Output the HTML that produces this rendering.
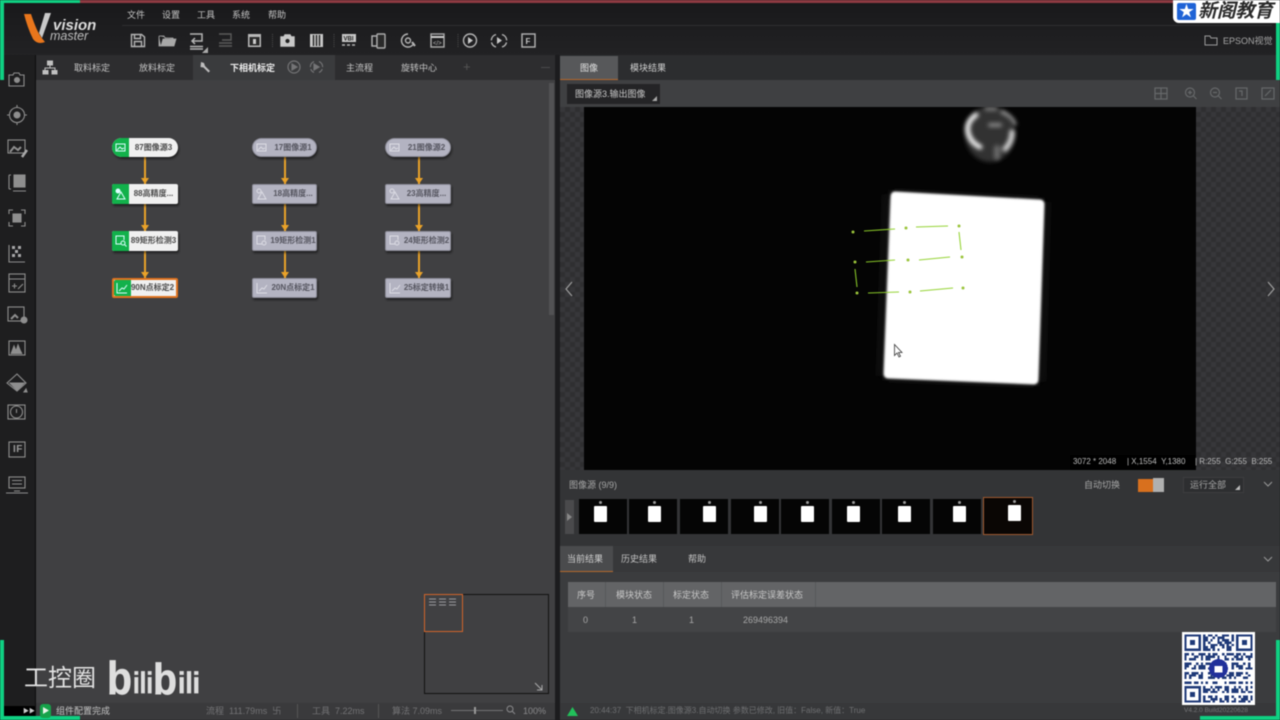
<!DOCTYPE html>
<html lang="zh"><head><meta charset="utf-8"><title>VisionMaster</title>
<style>
*{box-sizing:border-box}
html,body{margin:0;padding:0;background:#1f1f21}
body{width:1280px;height:720px;overflow:hidden;position:relative;font-family:"Liberation Sans","Noto Sans CJK SC",sans-serif;font-size:9px;color:#c4c4c4}
#w{position:absolute;left:0;top:0;width:1280px;height:720px;overflow:hidden;filter:blur(.45px)}
.a{position:absolute}
.t{position:absolute;white-space:nowrap;line-height:12px}
.n{position:absolute;width:66px;height:20px;border-radius:2px;font-weight:bold;font-size:8px;line-height:20px;box-shadow:1px 2px 2px rgba(0,0,0,.5);white-space:nowrap}
.g{background:#f0f0f0;color:#4a4a4a}
.g i{position:absolute;left:0;top:0;bottom:0;width:17px;background:#12b14b;border-radius:2px 0 0 2px}
.s{background:#b3b3c1;color:#55555f;border:1px solid #8d8d99}
.n b{position:absolute;left:17px;right:0;text-align:center;font-weight:bold}
.p{border-radius:10px}.p i{border-radius:10px 0 0 10px}
.n svg{position:absolute;left:3px;top:4px}
.th{position:absolute;top:499px;width:48px;height:35px;background:#050505}
.th:before{content:"";position:absolute;left:var(--x);top:7px;width:13px;height:16px;background:#fff;border-radius:1px}
.th:after{content:"";position:absolute;left:calc(var(--x) + 5px);top:2px;width:3px;height:3px;border-radius:2px;background:#999}
</style></head><body>
<div id="w">

<!-- panels -->
<div class="a" style="left:0;top:3px;width:1280px;height:52px;background:linear-gradient(#19191b,#222224)"></div>
<div class="a" style="left:0;top:55px;width:36px;height:665px;background:#1e1e1f"></div>
<div class="a" style="left:35px;top:55px;width:1px;height:665px;background:#0d0d0d"></div>
<div class="a" style="left:36px;top:55px;width:519px;height:25px;background:#2d2d2f"></div>
<div class="a" style="left:36px;top:80px;width:519px;height:623px;background:#404042"></div>
<div class="a" style="left:36px;top:703px;width:519px;height:17px;background:#3a3a3c"></div>
<div class="a" style="left:555px;top:55px;width:5px;height:665px;background:#1c1c1e"></div>
<div class="a" style="left:193px;top:55px;width:142px;height:25px;background:#3a3b3d"></div>
<div class="a" style="left:549px;top:83px;width:5px;height:232px;background:#525254"></div>

<!-- right panel -->
<div class="a" style="left:560px;top:55px;width:720px;height:25px;background:#2c2d2f"></div>
<div class="a" style="left:560px;top:56px;width:58px;height:24px;background:#57585a;border-bottom:1px solid #b5682c"></div>
<div class="a" style="left:560px;top:80px;width:720px;height:27px;background:#3f4042"></div>
<div class="a" style="left:567px;top:84px;width:93px;height:20px;background:#242426"></div>
<div class="a" style="left:560px;top:107px;width:24px;height:363px;background:repeating-conic-gradient(#2f2f31 0 25%,#37373a 0 50%) 0 0/10px 10px"></div>
<div class="a" style="left:1196px;top:107px;width:84px;height:363px;background:repeating-conic-gradient(#2f2f31 0 25%,#37373a 0 50%) 0 0/10px 10px"></div>
<div class="a" style="left:560px;top:470px;width:720px;height:76px;background:#333436"></div>
<div class="a" style="left:560px;top:546px;width:720px;height:26px;background:#37383a"></div>
<div class="a" style="left:560px;top:546px;width:53px;height:26px;background:#4a4b4d;border-bottom:1px solid #b5682c"></div>
<div class="a" style="left:560px;top:572px;width:720px;height:148px;background:#3b3c3e"></div>
<div class="a" style="left:560px;top:703px;width:720px;height:17px;background:#37383a"></div>

<!-- image -->
<svg class="a" style="left:584px;top:107px" width="612" height="363" viewBox="584 107 612 363">
<defs>
<filter id="b1" x="-10%" y="-10%" width="120%" height="120%"><feGaussianBlur stdDeviation="1"/></filter>
<filter id="b2" x="-30%" y="-30%" width="160%" height="160%"><feGaussianBlur stdDeviation="2.200"/></filter>
<filter id="b9" x="-30%" y="-30%" width="160%" height="160%"><feGaussianBlur stdDeviation="7"/></filter>
</defs>
<rect x="584" y="107" width="612" height="363" fill="#040404"/>
<polygon points="888,194 1045,202 1040,382 882,376" fill="#1c1c1c" filter="url(#b9)"/>
<ellipse cx="990" cy="134" rx="25" ry="28" fill="#303030" filter="url(#b2)"/>
<g fill="none" stroke="#f0f0f0" filter="url(#b2)" stroke-linecap="round">
<path d="M976 115Q966 122 968 132T980 147" stroke-width="5"/>
<path d="M1012 132Q1012 142 1005 149" stroke-width="5" stroke="#d8d8d8"/>
<path d="M1002 112Q1012 116 1015 124" stroke-width="3" stroke="#aaa"/>
<path d="M986 109h10" stroke-width="3" stroke="#888"/>
<path d="M990 125h10" stroke-width="4" stroke="#888"/>
<path d="M997 148v9" stroke-width="6" stroke="#6a6a6a"/>
</g>
<polygon points="895,196 1040,204 1034,380 888,374" fill="#fff" stroke="#fff" stroke-width="9" stroke-linejoin="round" filter="url(#b1)"/>
<g stroke="#8fd12a" stroke-width="1.100" fill="none" opacity=".95">
<path d="M864 231L895 229M916 227L948 226M959 232L961 250M950 257L919 260M895 260L866 262M855 269L857 287M868 293L899 292M920 291L953 288"/>
</g>
<g fill="#9ac43a"><circle cx="853" cy="232" r="1.500"/><circle cx="906" cy="228" r="1.500"/><circle cx="959" cy="226" r="1.500"/><circle cx="962" cy="257" r="1.500"/><circle cx="908" cy="260" r="1.500"/><circle cx="855" cy="262" r="1.500"/><circle cx="857" cy="293" r="1.500"/><circle cx="910" cy="292" r="1.500"/><circle cx="963" cy="288" r="1.500"/></g>
<path d="M894.500 344.500v11l2.500-2.500 2 4 1.500-.8-2-3.700h3.500z" fill="#fff" stroke="#333" stroke-width=".8"/>
</svg>
<svg class="a" style="left:562px;top:280px" width="14" height="18"><path d="M10 2L4 9l6 7" fill="none" stroke="#9a9a9a" stroke-width="1.300"/></svg>
<svg class="a" style="left:1264px;top:280px" width="14" height="18"><path d="M4 2l6 7-6 7" fill="none" stroke="#9a9a9a" stroke-width="1.300"/></svg>
<div class="a" style="left:1070px;top:455px;width:126px;height:15px;background:#000"></div>
<div class="t" style="left:1073px;top:456px;font-size:8px;color:#bdbdbd">3072 * 2048</div>
<div class="t" style="left:1127px;top:456px;font-size:8px;color:#bdbdbd">| X,1554 &nbsp;Y,1380</div>
<div class="t" style="left:1195px;top:456px;font-size:8px;color:#bdbdbd">| R:255 &nbsp;G:255 &nbsp;B:255</div>

<!-- image toolbar -->
<svg class="a" style="left:1150px;top:84px" width="125" height="20" fill="none" stroke="#66686a" stroke-width="1.200">
<rect x="5" y="4" width="12" height="11"/><path d="M5 9.500h12M11 4v11"/>
<circle cx="40" cy="8.500" r="4.500"/><path d="M43.500 12l3 3M38 8.500h4M40 6.500v4"/>
<circle cx="65" cy="8.500" r="4.500"/><path d="M68.500 12l3 3M63 8.500h4"/>
<rect x="86" y="4" width="11" height="11"/><path d="M89 7h3v5"/>
<rect x="112" y="4" width="12" height="11"/><path d="M115 12l6-6"/>
</svg>

<!-- top frame -->
<div class="a" style="left:75px;top:0;width:1205px;height:3px;background:#8e3a42"></div>
<div class="a" style="left:0;top:0;width:80px;height:3px;background:#0fd082"></div>
<div class="a" style="left:0;top:0;width:4px;height:80px;background:#0fd082"></div>
<div class="a" style="left:1276px;top:0;width:4px;height:80px;background:#0fd082"></div>
<div class="a" style="left:0;top:640px;width:4px;height:80px;background:#0fd082"></div>
<div class="a" style="left:1276px;top:640px;width:4px;height:80px;background:#0fd082"></div>
<div class="a" style="left:0;top:716px;width:80px;height:4px;background:#0fd082"></div>
<div class="a" style="left:1200px;top:716px;width:80px;height:4px;background:#0fd082"></div>

<!-- logo -->
<svg class="a" style="left:22px;top:10px" width="100" height="36">
<path d="M2 4h7c3 9 6 17 10 23l4 5c-5 2-9 1-12-3C7 21 4 12 2 4z" fill="#e8761c"/>
<path d="M23 3h6l-9 25-3-5z" fill="#c9c9c9"/>
<text x="31" y="20" font-family="Liberation Sans" font-style="italic" font-weight="bold" font-size="15" fill="#dcdcdc">vision</text>
<text x="28" y="30" font-family="Liberation Sans" font-style="italic" font-size="12.500" fill="#bdbdbd">master</text>
</svg>

<!-- menu -->
<div class="t" style="left:127px;top:9px">文件</div>
<div class="t" style="left:162px;top:9px">设置</div>
<div class="t" style="left:197px;top:9px">工具</div>
<div class="t" style="left:232px;top:9px">系统</div>
<div class="t" style="left:268px;top:9px">帮助</div>
<div class="a" style="left:122px;top:25px;width:1150px;height:1px;background:#2e2e30"></div>

<!-- toolbar icons -->
<svg class="a" style="left:125px;top:28px" width="420" height="24" fill="none" stroke="#b4b4b4" stroke-width="1.400">
<path d="M6.500 6.500h10l3 2.500v9.500h-13z"/><path d="M9.500 6.500v4h6v-4M9.500 18.500v-5h7v5"/>
<path d="M34 8v10h15l2-7H38l-2 7M34 8h5l1 2h8v1" fill="#a8a8a8" stroke="#a8a8a8" stroke-width=".8"/>
<path d="M65 6h12v7H68M70 10l-3 3 3 3M65 18.500h13M65 21h13" stroke-width="1.500"/>
<path d="M94 6h12v6H97M94 15h13M94 18h13" stroke="#5a5a5a"/>
<rect x="123" y="6" width="13" height="13" fill="#b8b8b8" stroke="none"/><rect x="124.500" y="9" width="10" height="8.500" fill="#2a2a2a" stroke="none"/><rect x="128" y="11" width="3" height="5" fill="#ccc" stroke="none"/>
<path d="M156 9h3l1-2h5l1 2h3v9h-13z" fill="#c8c8c8" stroke="#c8c8c8"/><circle cx="162.500" cy="13" r="2.800" fill="#222" stroke="#c8c8c8"/>
<rect x="185" y="6" width="13" height="13" fill="#c8c8c8" stroke="none"/><path d="M188.500 7v11M191.500 7v11M194.500 7v11" stroke="#222"/>
<rect x="217" y="6" width="14" height="8" fill="#c8c8c8" stroke="none"/><path d="M217 17h14" stroke-dasharray="3 2"/>
<text x="218.500" y="12.500" font-size="6" font-weight="bold" fill="#222" stroke="none">VBI</text>
<rect x="247" y="8" width="5" height="10"/><rect x="252" y="6" width="8" height="14" rx="1" fill="#2a2a2a" stroke="#aaa"/>
<path d="M283 6a6.500 6.500 0 1 0 6 9"/><circle cx="283" cy="12.500" r="2.500"/><path d="M287 14l3 4" stroke-width="2"/>
<rect x="306" y="6" width="13" height="13" stroke="#aaa"/><path d="M306 9h13" stroke="#ccc" stroke-width="2"/><text x="308" y="17" font-size="6" fill="#bbb" stroke="none">&lt;/&gt;</text>
<circle cx="345" cy="12.500" r="6.500"/><path d="M343 9v7l5-3.500z" fill="#c8c8c8" stroke="none"/>
<path d="M371 6.500a6.500 6.500 0 0 0 0 12.500M377 6.500a6.500 6.500 0 0 1 0 12.500" stroke-dasharray="8 2"/><path d="M372 9v7l5-3.500z" fill="#c8c8c8" stroke="none"/>
<rect x="397" y="6" width="13" height="13"/><text x="400.500" y="16" font-size="8" font-weight="bold" fill="#c8c8c8" stroke="none">F</text>
<path d="M147.500 6v13M209 6v13M333 6v13" stroke="#4a4a4a" stroke-width="1" stroke-dasharray="1 1"/>
</svg>
<svg class="a" style="left:201px;top:46px" width="8" height="8"><path d="M7 1v6H1z" fill="#aaa"/></svg>

<!-- brand -->
<div class="a" style="left:1173px;top:0;width:107px;height:23px;background:#fff;border-radius:0 0 0 6px"></div>
<div class="a" style="left:1177px;top:3px;width:19px;height:17px;background:#1f63d6;border-radius:2px;color:#fff;font-size:15px;line-height:17px;text-align:center">★</div>
<div class="t" style="left:1198px;top:1px;font-size:19px;line-height:22px;color:#2a2a2a;font-style:italic;font-weight:bold;letter-spacing:-.3px">新阁教育</div>
<svg class="a" style="left:1204px;top:34px" width="14" height="12" fill="none" stroke="#9b9b9b"><path d="M1 2h5l1 2h6v7H1z"/></svg>
<div class="t" style="left:1223px;top:35px;color:#a6a6a6">EPSON视觉</div>

<!-- tabs left -->
<svg class="a" style="left:42px;top:60px" width="16" height="15" fill="none" stroke="#c0c0c0"><rect x="5.500" y="1" width="5" height="4" fill="#c0c0c0"/><path d="M8 5v3M3 11V8h10v3"/><rect x="1" y="10.500" width="5" height="3.500" fill="#c0c0c0"/><rect x="10" y="10.500" width="5" height="3.500" fill="#c0c0c0"/></svg>
<div class="t" style="left:74px;top:62px">取料标定</div>
<div class="t" style="left:139px;top:62px">放料标定</div>
<svg class="a" style="left:199px;top:60px" width="13" height="13"><path d="M2 2l3 1 1 3 5 5-1.500 1.500-5-5-3-.5z" fill="#bdbdbd"/></svg>
<div class="t" style="left:230px;top:62px;color:#eee;font-weight:bold">下相机标定</div>
<svg class="a" style="left:286px;top:59px" width="40" height="16" fill="none" stroke="#747476" stroke-width="1.200"><circle cx="8" cy="8" r="6"/><path d="M6 5v6l5-3z" fill="#747476"/><path d="M28 2.500a6 6 0 0 0 0 11M33 2.500a6 6 0 0 1 0 11" stroke-dasharray="7 2"/><path d="M28 5v6l5-3z" fill="#747476"/></svg>
<div class="t" style="left:346px;top:62px">主流程</div>
<div class="t" style="left:401px;top:62px">旋转中心</div>
<div class="t" style="left:463px;top:61px;color:#555;font-size:13px">+</div>
<div class="a" style="left:541px;top:67px;width:9px;height:1px;background:#4a4a4c"></div>

<!-- right tabs text -->
<div class="t" style="left:580px;top:62px;color:#e0e0e0">图像</div>
<div class="t" style="left:630px;top:62px;color:#d0d0d0">模块结果</div>
<div class="t" style="left:575px;top:88px;color:#c8c8c8">图像源3.输出图像</div>
<svg class="a" style="left:652px;top:96px" width="6" height="6"><path d="M5 0v5H0z" fill="#aaa"/></svg>

<!-- sidebar icons -->
<svg class="a" style="left:0;top:64px" width="36" height="430" fill="none" stroke="#8e8e8e" stroke-width="1.100">
<path d="M9 11h4l1-2h5l1 2h4v11H9z"/><circle cx="17" cy="16" r="2.500" fill="#8e8e8e"/>
<circle cx="17" cy="51" r="7.500"/><circle cx="17" cy="51" r="3" fill="#8e8e8e"/><path d="M17 41v3M17 58v3M7 51h3M24 51h3"/>
<rect x="8" y="76" width="17" height="13"/><path d="M10 88l4-5 4 3 3-3" stroke-width="2"/><path d="M22 93l5-7" stroke-width="2.500" stroke="#a8a8a8"/>
<path d="M9 111v14M9 111h2M9 125h2M13 127h13"/><rect x="14" y="111" width="11" height="12" fill="#8e8e8e"/>
<path d="M9 150v-4h4M21 146h4v4M9 158v4h4M25 158v4h-4"/><rect x="13" y="150" width="8" height="8" fill="#8e8e8e"/>
<path d="M9 181v17h16"/><path d="M12 182h3v3h-3zM18 182h3v3h-3zM15 186h3v3h-3zM12 190h3v3h-3zM18 190h3v3h-3z" fill="#a8a8a8" stroke="none"/>
<rect x="9" y="210" width="16" height="18"/><path d="M9 215h16M12 222h5M14.500 219.500v5M18 225l5-5"/>
<rect x="8" y="243" width="16" height="14"/><path d="M11 255l4-4 3 3" stroke-width="2"/><circle cx="24" cy="256" r="3" fill="#8e8e8e"/>
<rect x="9" y="277" width="16" height="14"/><path d="M11 290l3-8 2 5 2-6 2 5 2 4" fill="#8e8e8e"/>
<path d="M7 319l10-9 9 9-9 8z"/><path d="M10 319h14l-7 7z" fill="#8e8e8e"/><path d="M26 325l-2 3h3z" fill="#8e8e8e"/>
<rect x="8" y="341" width="17" height="14"/><circle cx="16.500" cy="348" r="6"/><path d="M16.500 345v4"/>
<rect x="9" y="378" width="16" height="15"/>
<rect x="9" y="413" width="16" height="11"/><path d="M12 416.500h10M12 420h10M14 427h6M6 429h22"/>
</svg>
<div class="t" style="left:13px;top:444px;font-size:10px;font-weight:bold;color:#9a9a9a;letter-spacing:.5px">IF</div>
<div class="a" style="left:4px;top:706px;width:31px;height:10px;background:#000"></div>
<div class="t" style="left:23px;top:706px;font-size:6px;color:#ccc">▶▶</div>

<!-- flow connectors -->
<svg class="a" style="left:100px;top:130px" width="370" height="170" fill="#e9a229" stroke="none">
<path d="M44 27h2v27h-2zM44 74h2v27h-2zM44 121h2v27h-2zM184 27h2v27h-2zM184 74h2v27h-2zM184 121h2v27h-2zM318 27h2v27h-2zM318 74h2v27h-2zM318 121h2v27h-2z"/>
<path d="M41 48h8l-4 6zM41 95h8l-4 6zM41 142h8l-4 6zM181 48h8l-4 6zM181 95h8l-4 6zM181 142h8l-4 6zM315 48h8l-4 6zM315 95h8l-4 6zM315 142h8l-4 6z"/>
</svg>

<!-- nodes -->
<div class="n g p" style="left:112px;top:138px;height:19px;line-height:19px"><i></i><b>87图像源3</b><svg width="11" height="11" fill="none" stroke="#dff"><rect x="1" y="2" width="9" height="7"/><path d="M2 8l3-3 2 2 2-1"/></svg></div>
<div class="n g" style="left:112px;top:184px"><i></i><b>88高精度...</b><svg width="11" height="12" fill="none" stroke="#dff"><circle cx="3" cy="3" r="2" fill="#dff"/><path d="M6 4l4 7H2z"/></svg></div>
<div class="n g" style="left:112px;top:231px"><i></i><b>89矩形检测3</b><svg width="12" height="12" fill="none" stroke="#dff"><path d="M6 9H1V1h8v4"/><circle cx="8" cy="8" r="2"/><path d="M9.500 9.500l2 2"/></svg></div>
<div class="n g" style="left:112px;top:278px;border:2px solid #e0731f;box-shadow:none;line-height:16px"><i></i><b style="left:15px">90N点标定2</b><svg style="left:2px;top:2px" width="12" height="12" fill="none" stroke="#dff"><path d="M1 1v10h10M3 9l3-3 2 1 3-4"/></svg></div>

<div class="n s p" style="left:252px;top:138px;height:19px;line-height:17px;width:65px"><b>17图像源1</b><svg style="top:3px" width="11" height="11" fill="none" stroke="#dcdce4"><rect x="1" y="2" width="9" height="7"/><path d="M2 8l3-3 2 2 2-1"/></svg></div>
<div class="n s" style="left:252px;top:184px;width:65px;line-height:18px"><b>18高精度...</b><svg style="top:3px" width="11" height="12" fill="none" stroke="#dcdce4"><circle cx="3" cy="3" r="2"/><path d="M6 4l4 7H2z"/></svg></div>
<div class="n s" style="left:252px;top:231px;width:65px;line-height:18px"><b>19矩形检测1</b><svg style="top:3px" width="12" height="12" fill="none" stroke="#dcdce4"><path d="M6 9H1V1h8v4"/><circle cx="8" cy="8" r="2"/></svg></div>
<div class="n s" style="left:252px;top:278px;width:65px;line-height:18px"><b>20N点标定1</b><svg style="top:3px" width="12" height="12" fill="none" stroke="#dcdce4"><path d="M1 1v10h10M3 9l3-3 2 1 3-4"/></svg></div>

<div class="n s p" style="left:385px;top:138px;height:19px;line-height:17px"><b>21图像源2</b><svg style="top:3px" width="11" height="11" fill="none" stroke="#dcdce4"><rect x="1" y="2" width="9" height="7"/><path d="M2 8l3-3 2 2 2-1"/></svg></div>
<div class="n s" style="left:385px;top:184px;line-height:18px"><b>23高精度...</b><svg style="top:3px" width="11" height="12" fill="none" stroke="#dcdce4"><circle cx="3" cy="3" r="2"/><path d="M6 4l4 7H2z"/></svg></div>
<div class="n s" style="left:385px;top:231px;line-height:18px"><b>24矩形检测2</b><svg style="top:3px" width="12" height="12" fill="none" stroke="#dcdce4"><path d="M6 9H1V1h8v4"/><circle cx="8" cy="8" r="2"/></svg></div>
<div class="n s" style="left:385px;top:278px;line-height:18px"><b>25标定转换1</b><svg style="top:3px" width="12" height="12" fill="none" stroke="#dcdce4"><path d="M1 1v10h10M3 9l3-3 2 1 3-4"/></svg></div>

<!-- minimap -->
<div class="a" style="left:424px;top:594px;width:125px;height:100px;border:1px solid #111"></div>
<div class="a" style="left:424px;top:594px;width:39px;height:38px;border:1px solid #d2642a"></div>
<svg class="a" style="left:428px;top:597px" width="30" height="12" stroke="#9a9a9e"><path d="M1 2h7M1 5h7M1 8h7M11 2h7M11 5h7M11 8h7M21 2h7M21 5h7M21 8h7"/></svg>
<svg class="a" style="left:534px;top:682px" width="10" height="10" fill="none" stroke="#aaa"><path d="M1 1l7 7M8 3v5H3"/></svg>

<!-- watermark -->
<div class="t" style="left:24px;top:665px;font-size:24px;line-height:28px;color:#e2e2e2">工控圈</div>
<svg class="a" style="left:106px;top:652px" width="98" height="46" fill="#dedede" stroke="#dedede" stroke-width=".7" font-family="Liberation Sans" font-weight="bold">
<text x="1" y="42" font-size="46" textLength="25" lengthAdjust="spacingAndGlyphs">b</text>
<text x="27" y="41" font-size="30" textLength="20" lengthAdjust="spacingAndGlyphs">ili</text>
<text x="47" y="42" font-size="44" textLength="24" lengthAdjust="spacingAndGlyphs">b</text>
<text x="72" y="41" font-size="30" textLength="22" lengthAdjust="spacingAndGlyphs">ili</text>
</svg>

<!-- status left -->
<div class="a" style="left:40px;top:704px;width:11px;height:14px;background:#16a34a;border-radius:3px"></div>
<svg class="a" style="left:42px;top:707px" width="8" height="8"><path d="M1 0v7l6-3.500z" fill="#e8f5e8"/></svg>
<div class="t" style="left:56px;top:705px;color:#c4c4c4">组件配置完成</div>
<div class="t" style="left:206px;top:705px;color:#737375">流程 &nbsp;111.79ms &nbsp;卐</div>
<div class="a" style="left:297px;top:704px;width:1px;height:14px;background:#555"></div>
<div class="t" style="left:312px;top:705px;color:#737375">工具 &nbsp;7.22ms</div>
<div class="a" style="left:378px;top:704px;width:1px;height:14px;background:#555"></div>
<div class="t" style="left:392px;top:705px;color:#737375">算法 7.09ms</div>
<div class="a" style="left:451px;top:710px;width:52px;height:1px;background:#737375"></div>
<div class="a" style="left:474px;top:707px;width:2px;height:7px;background:#999"></div>
<svg class="a" style="left:506px;top:705px" width="10" height="10" fill="none" stroke="#8a8a8c"><circle cx="4" cy="4" r="3"/><path d="M6 6l3 3"/></svg>
<div class="t" style="left:523px;top:705px;color:#8a8a8c">100%</div>

<!-- thumbnails strip -->
<div class="t" style="left:569px;top:479px;color:#a6a6a6">图像源 (9/9)</div>
<div class="t" style="left:1084px;top:479px;color:#a6a6a6">自动切换</div>
<div class="a" style="left:1138px;top:479px;width:15px;height:13px;background:#d8701e"></div>
<div class="a" style="left:1153px;top:478px;width:11px;height:14px;background:#b0b0b0"></div>
<div class="a" style="left:1183px;top:477px;width:61px;height:16px;background:#2d2e30;border:1px solid #3d3d3f"></div>
<div class="t" style="left:1190px;top:479px;color:#a6a6a6">运行全部</div>
<svg class="a" style="left:1235px;top:485px" width="6" height="6"><path d="M5 0v5H0z" fill="#bbb"/></svg>
<svg class="a" style="left:1262px;top:480px" width="12" height="9" fill="none" stroke="#999"><path d="M2 2l4 4 4-4"/></svg>
<div class="a" style="left:565px;top:500px;width:9px;height:34px;background:#4a4a4c"></div>
<svg class="a" style="left:567px;top:513px" width="5" height="8"><path d="M0 0v8l5-4z" fill="#888"/></svg>
<div class="th" style="left:579px;--x:15px"></div>
<div class="th" style="left:629px;--x:19px"></div>
<div class="th" style="left:680px;--x:23px"></div>
<div class="th" style="left:731px;--x:23px"></div>
<div class="th" style="left:781px;--x:20px"></div>
<div class="th" style="left:832px;--x:15px"></div>
<div class="th" style="left:882px;--x:16px"></div>
<div class="th" style="left:933px;--x:20px"></div>
<div class="th" style="left:983px;top:497px;width:50px;height:38px;border:1px solid #a05a30;background:#0a0604;--x:24px"></div>

<!-- results -->
<div class="t" style="left:567px;top:553px;color:#d0d0d0">当前结果</div>
<div class="t" style="left:621px;top:553px;color:#c4c4c4">历史结果</div>
<div class="t" style="left:688px;top:553px;color:#c4c4c4">帮助</div>
<svg class="a" style="left:1262px;top:555px" width="12" height="9" fill="none" stroke="#999"><path d="M2 2l4 4 4-4"/></svg>
<div class="a" style="left:568px;top:582px;width:708px;height:25px;background:#636466"></div>
<div class="a" style="left:568px;top:607px;width:708px;height:25px;background:#434446"></div>
<div class="a" style="left:605px;top:582px;width:1px;height:25px;background:#57585a"></div>
<div class="a" style="left:663px;top:582px;width:1px;height:25px;background:#57585a"></div>
<div class="a" style="left:721px;top:582px;width:1px;height:25px;background:#57585a"></div>
<div class="a" style="left:815px;top:582px;width:1px;height:25px;background:#57585a"></div>
<div class="t" style="left:577px;top:589px;color:#c8c8c8">序号</div>
<div class="t" style="left:616px;top:589px;color:#c8c8c8">模块状态</div>
<div class="t" style="left:673px;top:589px;color:#c8c8c8">标定状态</div>
<div class="t" style="left:731px;top:589px;color:#c8c8c8">评估标定误差状态</div>
<div class="t" style="left:583px;top:614px;color:#a8a8a8">0</div>
<div class="t" style="left:632px;top:614px;color:#a8a8a8">1</div>
<div class="t" style="left:689px;top:614px;color:#a8a8a8">1</div>
<div class="t" style="left:743px;top:614px;color:#a8a8a8">269496394</div>

<!-- status right -->
<svg class="a" style="left:567px;top:707px" width="11" height="9"><path d="M5.500 0L11 9H0z" fill="#22c05a"/></svg>
<div class="t" style="left:590px;top:705px;font-size:8px;color:#6f7072">20:44:37 &nbsp;下相机标定.图像源3.自动切换 参数已修改, 旧值：False, 新值：True</div>
<div class="t" style="left:1184px;top:705px;font-size:6.500px;color:#77787a">V4.2.0 Build20220628</div>

<!-- QR -->
<svg class="a" style="left:1182px;top:632px" width="73" height="73" viewBox="0 0 31 31" shape-rendering="crispEdges">
<rect width="31" height="31" fill="#fff"/>
<g stroke="#1f3a78" stroke-width="1" fill="none">
<path d="M9 1.500h21" stroke-dasharray="1 1 2 1 1 2 3 1 1 1 2 2"/>
<path d="M9 3.500h13" stroke-dasharray="2 1 1 2 1 1 3 1"/>
<path d="M9 5.500h13" stroke-dasharray="1 2 3 1 2 1 1 1"/>
<path d="M9 7.500h13" stroke-dasharray="3 1 1 1 1 3 2 1"/>
<path d="M1 9.500h29" stroke-dasharray="2 1 1 2 3 1 1 1 2 2 1 1 3 1"/>
<path d="M1 11.500h29" stroke-dasharray="1 1 3 2 1 1 2 3 1 2 2 1"/>
<path d="M1 13.500h29" stroke-dasharray="3 2 1 1 1 1 2 1 4 1 1 2"/>
<path d="M1 15.500h29" stroke-dasharray="1 2 2 1 3 1 1 3 1 1 2 2"/>
<path d="M1 17.500h29" stroke-dasharray="2 1 3 1 1 2 1 1 3 2 1 1"/>
<path d="M1 19.500h29" stroke-dasharray="1 1 1 3 2 2 3 1 1 1 2 1"/>
<path d="M1 21.500h29" stroke-dasharray="3 1 2 1 1 1 1 2 2 3 1 1"/>
<path d="M9 23.500h21" stroke-dasharray="1 2 1 1 3 1 2 2 1 1"/>
<path d="M9 25.500h21" stroke-dasharray="2 1 3 2 1 1 1 1 3 1"/>
<path d="M9 27.500h21" stroke-dasharray="1 1 2 1 1 3 2 1 1 2"/>
<path d="M9 29.500h21" stroke-dasharray="3 1 1 2 2 1 1 1 2 1"/>
<path d="M9 2.500h21" stroke-dasharray="2 2 1 1 3 3 1 1"/>
<path d="M9 4.500h21" stroke-dasharray="1 1 1 3 2 1 3 2"/>
<path d="M9 6.500h13" stroke-dasharray="2 1 2 3 1 1"/>
<path d="M1 10.500h29" stroke-dasharray="1 3 2 1 1 1 4 1 1 2"/>
<path d="M1 14.500h29" stroke-dasharray="2 2 1 1 3 2 1 1 2 1"/>
<path d="M1 18.500h29" stroke-dasharray="1 1 3 1 2 3 1 1 1 2"/>
<path d="M9 24.500h21" stroke-dasharray="3 1 1 1 1 2 2 1"/>
<path d="M9 28.500h21" stroke-dasharray="1 2 3 1 1 1 2 2"/>
</g>
<g fill="#fff" stroke="#1f3a78" stroke-width="1">
<rect x="1.500" y="1.500" width="6" height="6"/><rect x="23.500" y="1.500" width="6" height="6"/><rect x="1.500" y="23.500" width="6" height="6"/>
</g>
<g fill="#1f3a78"><rect x="3.500" y="3.500" width="2" height="2"/><rect x="25.500" y="3.500" width="2" height="2"/><rect x="3.500" y="25.500" width="2" height="2"/></g>
<circle cx="15.500" cy="15.500" r="4" fill="#20309a"/><rect x="13.800" y="14.500" width="3.400" height="2.800" fill="#fff"/>
</svg>
</div>
</body></html>
